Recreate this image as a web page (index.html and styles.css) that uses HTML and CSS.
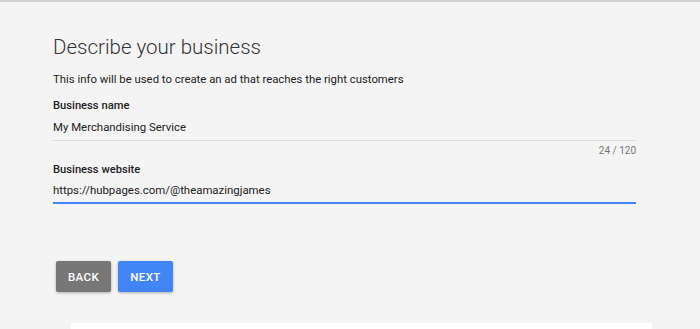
FILE: index.html
```html
<!DOCTYPE html>
<html lang="en">
<head>
<meta charset="utf-8">
<title>Describe your business</title>
<link rel="stylesheet" href="styles.css">
</head>
<body>
<main class="page">
  <section class="form">
    <h1 class="title">Describe your business</h1>
    <p class="subtitle">This info will be used to create an ad that reaches the right customers</p>
    <div class="field">
      <label class="label">Business name</label>
      <div class="input">My Merchandising Service</div>
      <div class="counter">24 / 120</div>
    </div>
    <div class="field">
      <label class="label">Business website</label>
      <div class="input input-focused">https://hubpages.com/@theamazingjames</div>
    </div>
    <div class="actions">
      <button class="btn btn-back">BACK</button>
      <button class="btn btn-next">NEXT</button>
    </div>
  </section>
  <div class="panel"></div>
</main>
</body>
</html>
```

FILE: styles.css
```css
html, body {
  margin: 0;
  padding: 0;
}
body {
  background: #f4f4f4;
  font-family: Roboto, "Liberation Sans", Arial, sans-serif;
  color: #222;
  height: 329px;
  overflow: hidden;
}
.page {
  border-top: 2px solid #cfcfcf;
  display: flex;
  flex-direction: column;
}
.form {
  width: 583px;
  padding-left: 53px;
  display: flex;
  flex-direction: column;
}
.title {
  margin: 33px 0 0;
  font-size: 20.5px;
  line-height: 24px;
  font-weight: 300;
  color: #333;
}
.subtitle {
  margin: 13px 0 0;
  font-size: 11.35px;
  line-height: 14px;
  color: #222;
}
.field {
  display: flex;
  flex-direction: column;
}
.label {
  margin-top: 13px;
  font-size: 11.2px;
  line-height: 14px;
  font-weight: 500;
  color: #222;
}
.input {
  margin-top: 6.5px;
  font-size: 11.4px;
  line-height: 14px;
  padding-bottom: 6.5px;
  border-bottom: 1px solid #dcdcdc;
  color: #222;
}
.input-focused {
  padding-bottom: 5px;
  border-bottom: 2px solid #4285f4;
}
.counter {
  margin-top: 3.5px;
  text-align: right;
  font-size: 10px;
  line-height: 12px;
  color: #777;
}
.field + .field .label {
  margin-top: 6px;
}
.actions {
  display: flex;
  gap: 7px;
  margin-top: 57px;
  margin-left: 3px;
}
.btn {
  border: none;
  border-radius: 2px;
  height: 31px;
  width: 55px;
  padding: 0;
  font-family: Roboto, "Liberation Sans", Arial, sans-serif;
  font-size: 11.5px;
  font-weight: 500;
  letter-spacing: 0.4px;
  color: #fff;
  box-shadow: 0 1px 3px rgba(0,0,0,0.3);
}
.btn-back {
  background: #777777;
}
.btn-next {
  background: #4285f4;
}
.panel {
  margin-top: 31px;
  margin-left: 71px;
  width: 581px;
  height: 20px;
  background: #fff;
}
```
